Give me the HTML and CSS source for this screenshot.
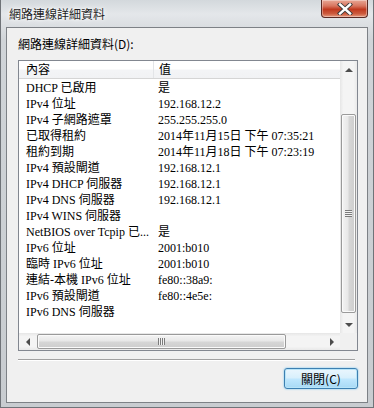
FILE: index.html
```html
<!DOCTYPE html>
<html lang="zh-Hant">
<head>
    <meta charset="UTF-8">
    <title>網路連線詳細資料</title>
    <link rel="stylesheet" href="styles.css">
</head>
<body>
    <div class="window">
        <div class="titlebar">
            <span class="title">網路連線詳細資料</span>
            <div class="close-btn">
                <svg width="16" height="12" viewBox="0 0 16 12">
                    <path d="M3 1.5 L13 10.5 M13 1.5 L3 10.5" stroke="#3a3a3a" stroke-width="4.2" stroke-linecap="square"/>
                    <path d="M3 1.5 L13 10.5 M13 1.5 L3 10.5" stroke="#ffffff" stroke-width="2.4" stroke-linecap="square"/>
                </svg>
            </div>
        </div>

        <div class="client">
            <div class="label">網路連線詳細資料(D):</div>

            <div class="listbox">
                <div class="list-main">
                    <div class="list-view">
                        <div class="list-header">
                            <div class="col1">內容</div>
                            <div class="col2">值</div>
                        </div>
                        <div class="list-rows">
                            <div class="row"><div class="col1">DHCP 已啟用</div><div class="col2">是</div></div>
                            <div class="row"><div class="col1">IPv4 位址</div><div class="col2">192.168.12.2</div></div>
                            <div class="row"><div class="col1">IPv4 子網路遮罩</div><div class="col2">255.255.255.0</div></div>
                            <div class="row"><div class="col1">已取得租約</div><div class="col2">2014年11月15日 下午 07:35:21</div></div>
                            <div class="row"><div class="col1">租約到期</div><div class="col2">2014年11月18日 下午 07:23:19</div></div>
                            <div class="row"><div class="col1">IPv4 預設閘道</div><div class="col2">192.168.12.1</div></div>
                            <div class="row"><div class="col1">IPv4 DHCP 伺服器</div><div class="col2">192.168.12.1</div></div>
                            <div class="row"><div class="col1">IPv4 DNS 伺服器</div><div class="col2">192.168.12.1</div></div>
                            <div class="row"><div class="col1">IPv4 WINS 伺服器</div><div class="col2"></div></div>
                            <div class="row"><div class="col1">NetBIOS over Tcpip 已...</div><div class="col2">是</div></div>
                            <div class="row"><div class="col1">IPv6 位址</div><div class="col2">2001:b010</div></div>
                            <div class="row"><div class="col1">臨時 IPv6 位址</div><div class="col2">2001:b010</div></div>
                            <div class="row"><div class="col1">連結-本機 IPv6 位址</div><div class="col2">fe80::38a9:</div></div>
                            <div class="row"><div class="col1">IPv6 預設閘道</div><div class="col2">fe80::4e5e:</div></div>
                            <div class="row"><div class="col1">IPv6 DNS 伺服器</div><div class="col2"></div></div>
                        </div>
                    </div>
                    <div class="vscroll">
                        <div class="sb-btn"><span class="arrow-up"></span></div>
                        <div class="vtrack">
                            <div class="vthumb"><span class="grip-h"></span></div>
                        </div>
                        <div class="sb-btn"><span class="arrow-down"></span></div>
                    </div>
                </div>
                <div class="hscroll-row">
                    <div class="hscroll">
                        <div class="sb-btn"><span class="arrow-left"></span></div>
                        <div class="htrack">
                            <div class="hthumb"><span class="grip-v"></span></div>
                        </div>
                        <div class="sb-btn"><span class="arrow-right"></span></div>
                    </div>
                    <div class="corner"></div>
                </div>
            </div>

            <div class="separator"></div>

            <div class="button-row">
                <button class="close-button">關閉(C)</button>
            </div>
        </div>
    </div>
</body>
</html>
```

FILE: styles.css
```css
body {
    margin: 0;
    font-family: "Liberation Serif", "Noto Sans CJK TC", serif;
    font-size: 12px;
    color: #000;
}

.window {
    width: 374px;
    height: 408px;
    box-sizing: border-box;
    display: flex;
    flex-direction: column;
    background: linear-gradient(to bottom, #d3d8dc 0px, #e4e7ea 14px, #d0d4d8 40px, #c8ccd0 100%);
    border: 1px solid #6f7378;
    border-top: none;
    padding: 0 5px 4px 5px;
}

.titlebar {
    height: 27px;
    display: flex;
    align-items: flex-start;
    justify-content: space-between;
    flex-shrink: 0;
}

.title {
    font-family: "Noto Sans CJK TC", sans-serif;
    font-size: 12px;
    line-height: 14px;
    margin: 7px 0 0 3px;
    color: #1e1e1e;
    text-shadow: 0 0 6px #ffffff, 0 0 3px #ffffff;
}

.close-btn {
    width: 47px;
    height: 18px;
    box-sizing: border-box;
    margin-right: 0;
    border: 1px solid #5a2a24;
    border-top: none;
    border-radius: 0 0 4px 4px;
    background: linear-gradient(to bottom, #e8a896 0%, #d8755f 35%, #c0391f 55%, #cc5a3d 80%, #e69a7f 100%);
    display: flex;
    align-items: center;
    justify-content: center;
    box-shadow: inset 0 0 0 1px rgba(255, 255, 255, 0.35);
}

.client {
    flex: 1;
    background: #f0f0f0;
    border: 1px solid #7d8186;
    padding: 8px 9px 0 11px;
    display: flex;
    flex-direction: column;
}

.label {
    font-family: "Noto Sans CJK TC", sans-serif;
    line-height: 16px;
    height: 16px;
}

.listbox {
    margin-top: 8px;
    border: 1px solid #828790;
    background: #fff;
    display: flex;
    flex-direction: column;
}

.list-main {
    display: flex;
    height: 272px;
}

.list-view {
    flex: 1;
    display: flex;
    flex-direction: column;
}

.list-header {
    display: flex;
    height: 17px;
    line-height: 16px;
    background: linear-gradient(to bottom, #ffffff 0%, #ffffff 45%, #f3f4f6 55%, #f1f2f4 100%);
    border-bottom: 1px solid #d5d5d5;
    font-family: "Noto Sans CJK TC", sans-serif;
}

.list-header .col1 {
    border-right: 1px solid #e3e5e8;
}

.col1 {
    width: 127px;
    padding-left: 7px;
    white-space: nowrap;
    overflow: hidden;
}

.col2 {
    padding-left: 5px;
    white-space: nowrap;
}

.list-rows {
    padding-top: 1px;
}

.row {
    display: flex;
    height: 16px;
    line-height: 16px;
}

.vscroll {
    width: 17px;
    display: flex;
    flex-direction: column;
    background: linear-gradient(to right, #e6e6e6 0%, #f4f4f4 20%, #f4f4f4 80%, #e9e9e9 100%);
}

.sb-btn {
    width: 17px;
    height: 17px;
    display: flex;
    align-items: center;
    justify-content: center;
    flex-shrink: 0;
}

.vtrack {
    flex: 1;
    padding-top: 36px;
}

.vthumb {
    height: 199px;
    margin: 0 1px;
    box-sizing: border-box;
    border: 1px solid #9a9a9a;
    border-radius: 2px;
    background: linear-gradient(to right, #f4f4f4 0%, #e8e8e8 45%, #d6d6d6 55%, #cdcdcd 100%);
    box-shadow: inset 0 0 0 1px #fafafa;
    display: flex;
    align-items: center;
    justify-content: center;
}

.grip-h {
    width: 7px;
    height: 7px;
    background: repeating-linear-gradient(to bottom, #7b7b7b 0px, #7b7b7b 1px, #f2f2f2 1px, #f2f2f2 2px);
}

.hscroll-row {
    display: flex;
    height: 17px;
}

.hscroll {
    flex: 1;
    display: flex;
    background: linear-gradient(to bottom, #e6e6e6 0%, #f4f4f4 20%, #f4f4f4 80%, #e9e9e9 100%);
}

.htrack {
    flex: 1;
    padding-left: 1px;
}

.hthumb {
    width: 249px;
    height: 15px;
    margin-top: 1px;
    box-sizing: border-box;
    border: 1px solid #9a9a9a;
    border-radius: 2px;
    background: linear-gradient(to bottom, #f4f4f4 0%, #e8e8e8 45%, #d6d6d6 55%, #cdcdcd 100%);
    box-shadow: inset 0 0 0 1px #fafafa;
    display: flex;
    align-items: center;
    justify-content: center;
}

.grip-v {
    width: 7px;
    height: 7px;
    background: repeating-linear-gradient(to right, #7b7b7b 0px, #7b7b7b 1px, #f2f2f2 1px, #f2f2f2 2px);
}

.corner {
    width: 17px;
    background: #f0f0f0;
}

.arrow-up, .arrow-down, .arrow-left, .arrow-right {
    width: 0;
    height: 0;
    border: 4px solid transparent;
}

.arrow-up {
    border-bottom: 4px solid #4d4d4d;
    border-top-width: 0;
}

.arrow-down {
    border-top: 4px solid #4d4d4d;
    border-bottom-width: 0;
}

.arrow-left {
    border-right: 4px solid #4d4d4d;
    border-left-width: 0;
}

.arrow-right {
    border-left: 4px solid #4d4d4d;
    border-right-width: 0;
}

.separator {
    margin-top: 8px;
    margin-right: 3px;
    height: 1px;
    background: #a0a0a0;
    border-bottom: 1px solid #ffffff;
}

.button-row {
    display: flex;
    justify-content: flex-end;
    margin-top: 7px;
    padding-right: 0;
}

.close-button {
    width: 74px;
    height: 21px;
    font-family: "Noto Sans CJK TC", sans-serif;
    font-size: 12px;
    line-height: 14px;
    padding: 0;
    color: #000;
    border: 1px solid #3c7fb1;
    border-radius: 3px;
    background: linear-gradient(to bottom, #eaf6fd 0%, #d9f0fc 45%, #bee6fd 55%, #a7d9f5 100%);
    box-shadow: inset 0 0 0 1px #b8e4f8, 0 0 2px #5fbdf0;
}
```
